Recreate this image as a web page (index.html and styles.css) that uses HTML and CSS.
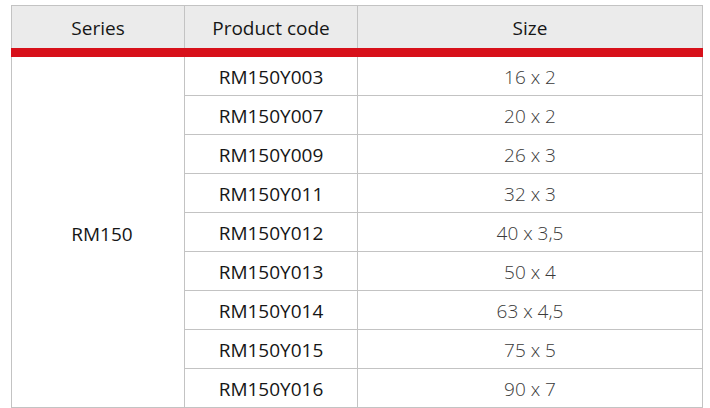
FILE: index.html
```html
<!DOCTYPE html>
<html>
<head>
<meta charset="utf-8">
<link rel="stylesheet" href="styles.css">
</head>
<body>
<table class="spec">
  <thead>
    <tr>
      <th class="c-series">Series</th>
      <th class="c-code">Product code</th>
      <th class="c-size">Size</th>
    </tr>
  </thead>
  <tbody>
    <tr><td class="series" rowspan="9">RM150</td><td class="code">RM150Y003</td><td class="size">16 x 2</td></tr>
    <tr><td class="code">RM150Y007</td><td class="size">20 x 2</td></tr>
    <tr><td class="code">RM150Y009</td><td class="size">26 x 3</td></tr>
    <tr><td class="code">RM150Y011</td><td class="size">32 x 3</td></tr>
    <tr><td class="code">RM150Y012</td><td class="size">40 x 3,5</td></tr>
    <tr><td class="code">RM150Y013</td><td class="size">50 x 4</td></tr>
    <tr><td class="code">RM150Y014</td><td class="size">63 x 4,5</td></tr>
    <tr><td class="code">RM150Y015</td><td class="size">75 x 5</td></tr>
    <tr><td class="code">RM150Y016</td><td class="size">90 x 7</td></tr>
  </tbody>
</table>
</body>
</html>
```
FILE: styles.css
```css
html, body {
  margin: 0;
  padding: 0;
  background: #ffffff;
}
body {
  font-family: "Open Sans", "Liberation Sans", sans-serif;
  color: #1e1e1e;
}
.spec {
  margin: 5px 0 0 11px;
  width: 692px;
  border-collapse: collapse;
  table-layout: fixed;
}
.spec th,
.spec td {
  border: 1px solid #c3c3c3;
  padding: 2px 0 0;
  text-align: center;
  vertical-align: middle;
}
.spec th {
  background: #ebebeb;
  height: 40px;
  font-size: 19px;
  font-weight: 400;
  color: #161616;
  border-bottom: 9px solid #d7101a;
}
.c-series { width: 172px; }
.c-code { width: 172px; }
.spec td {
  height: 36px;
  font-size: 19px;
}
.spec .series {
  color: #161616;
  padding: 4px 0 0 8px;
}
.code {
  color: #161616;
}
.size {
  color: #3a3a3a;
  font-weight: 300;
}
```
